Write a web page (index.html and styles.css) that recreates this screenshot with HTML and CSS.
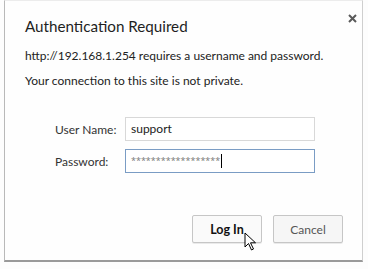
FILE: index.html
```html
<!DOCTYPE html>
<html>
<head>
<meta charset="utf-8">
<link rel="stylesheet" href="styles.css">
</head>
<body>
<div class="dialog">
  <div class="head">
    <h1 class="title">Authentication Required</h1>
    <span class="close">
      <svg width="9" height="9" viewBox="0 0 9 9"><path d="M1 1 L8 8 M8 1 L1 8" stroke="#5a5a5a" stroke-width="2"/></svg>
    </span>
  </div>
  <p class="msg">http://192.168.1.254 requires a username and password.</p>
  <p class="msg">Your connection to this site is not private.</p>
  <div class="form">
    <div class="row">
      <label class="label">User Name:</label>
      <div class="input">support</div>
    </div>
    <div class="row">
      <label class="label">Password:</label>
      <div class="input focus"><span class="stars">******************</span><span class="caret"></span></div>
    </div>
  </div>
  <div class="buttons">
    <div class="btn primary">Log In
      <svg class="cursor" width="14" height="20" viewBox="0 0 14 20"><path d="M1 1 L1 15 L4.5 11.5 L7.5 18 L9.5 17 L6.5 10.8 L11.5 10.8 Z" fill="#fff" stroke="#000" stroke-width="1" stroke-linejoin="miter"/></svg>
    </div>
    <div class="btn">Cancel</div>
  </div>
</div>
</body>
</html>
```
FILE: styles.css
```css
html, body {
  margin: 0;
  padding: 0;
  background: #fdfdfd;
}
body {
  font-family: "Lato", "Open Sans", sans-serif;
  color: #222;
  width: 368px;
  height: 269px;
  overflow: hidden;
}
.dialog {
  margin-left: 4px;
  width: 359px;
  height: 262px;
  border-top: 1px solid #ececec;
  border-left: 1px solid #b9b9b9;
  border-right: 1px solid #cfcfcf;
  border-bottom: 2px solid #9a9a9a;
  background: #fefefe;
  box-sizing: border-box;
  padding: 14px 0 0 20px;
  display: flex;
  flex-direction: column;
}
.head {
  display: flex;
  justify-content: space-between;
  align-items: flex-start;
}
.title {
  margin: 0;
  font-size: 15.2px;
  font-weight: normal;
  line-height: 22px;
  color: #1f1f1f;
}
.close {
  margin-right: 5px;
  margin-top: -1px;
  display: flex;
}
.msg {
  margin: 11px 0 0 0;
  font-size: 12px;
  line-height: 16px;
  color: #222;
}
.msg + .msg {
  margin-top: 9px;
}
.form {
  margin-top: 28px;
  display: flex;
  flex-direction: column;
  gap: 8px;
}
.row {
  display: flex;
  align-items: center;
}
.label {
  width: 70px;
  margin-left: 30px;
  font-size: 12px;
  color: #333;
}
.input {
  width: 190px;
  height: 24px;
  box-sizing: border-box;
  border: 1px solid #d8d8d8;
  background: #fff;
  font-size: 12px;
  line-height: 22px;
  padding-left: 5px;
  color: #222;
  display: flex;
  align-items: center;
}
.input.focus {
  border-color: #7a9cc4;
}
.stars {
  font-family: "Open Sans", sans-serif;
  color: #777;
  font-size: 9px;
}
.caret {
  display: inline-block;
  width: 1px;
  height: 14px;
  background: #000;
  margin-left: 1px;
}
.buttons {
  margin-top: auto;
  margin-bottom: 17px;
  display: flex;
  justify-content: flex-end;
  gap: 11px;
  padding-right: 19px;
}
.btn {
  position: relative;
  width: 70px;
  height: 28px;
  box-sizing: border-box;
  border: 1px solid #c6c6c6;
  border-radius: 2px;
  background: #f6f6f6;
  box-shadow: 0 1px 0 rgba(0,0,0,0.08);
  font-size: 12px;
  color: #555;
  display: flex;
  align-items: center;
  justify-content: center;
}
.btn.primary {
  font-weight: bold;
  font-size: 12.5px;
  color: #111;
  background: #fafafa;
}
.cursor {
  position: absolute;
  left: 51px;
  top: 16px;
}
```
